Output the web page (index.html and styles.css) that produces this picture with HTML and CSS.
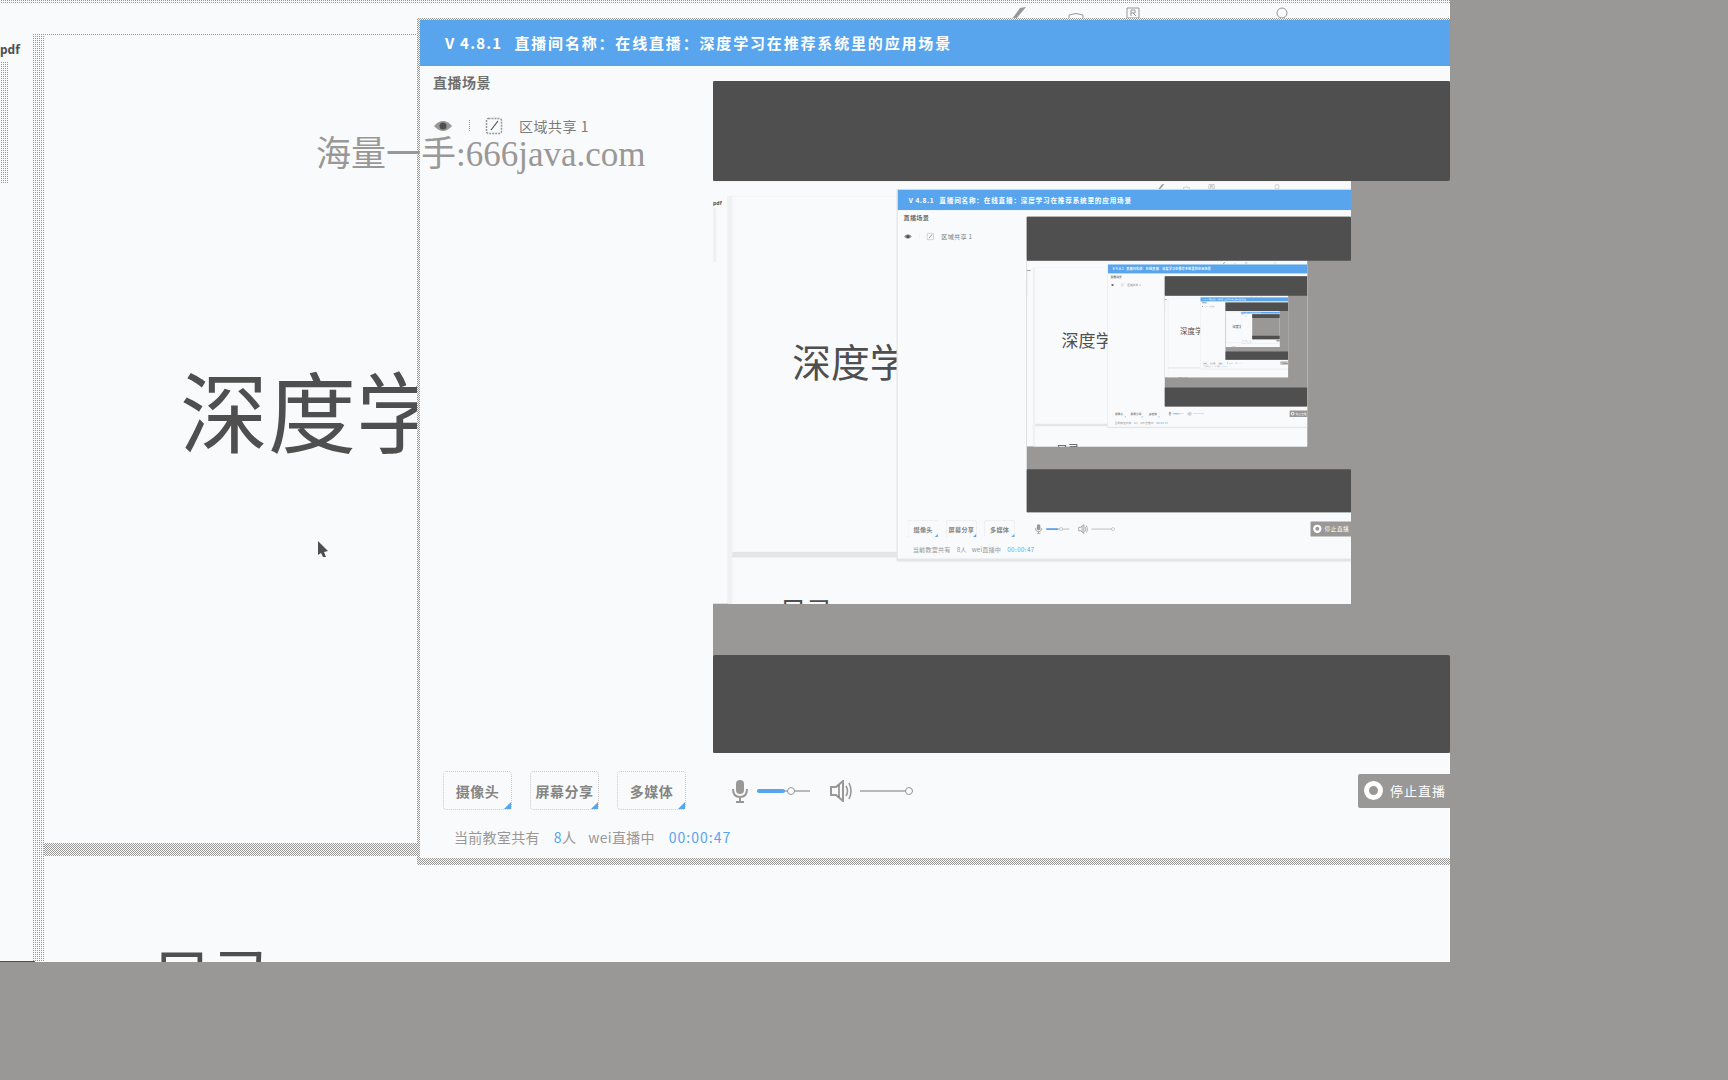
FILE: index.html
```html
<!DOCTYPE html>
<html lang='zh-CN'>
<head>
	<title>直播间</title>
	<meta charset='UTF-8'>
	<link rel="stylesheet" href="styles.css">
</head>
<body>
	<div class='screen'>
		<div class='desktop'>
			<div class='top-noise'></div>
			<div class='topbar'>
				<svg class='top-icon first' width='16' height='14' viewBox='0 0 16 14'><path d='M1 13 L9 2 L15 1 L10 7 L5 13 Z' fill='#999896'/></svg>
				<svg class='top-icon' width='16' height='14' viewBox='0 0 16 14'><path d='M1 13 V9 Q8 6 15 9 V13' fill='none' stroke='#999896'/></svg>
				<svg class='top-icon' width='16' height='14' viewBox='0 0 16 14'><path d='M2 2 H14 V12 H2 Z M6 4 V10 M6 4 H10 V7 H6 M8 7 L11 10' fill='none' stroke='#999896'/></svg>
				<svg class='top-icon last' width='12' height='14' viewBox='0 0 12 14'><circle cx='6' cy='7' r='5' fill='none' stroke='#999896'/></svg>
			</div>
			<div class='workspace'>
				<div class='sidebar'>
					<div class='file-name'>pdf</div>
					<div class='scrollbar'></div>
				</div>
				<div class='pages'>
					<div class='page page-first'><div class='page-title'>深度学习</div></div>
					<div class='page-gap'></div>
					<div class='page page-second'><div class='page-heading'>目录</div></div>
				</div>
			</div>
			<div class='bottom-edge'></div>
			<div class='window'>
				<div class='window-inner'>
					<div class='window-head'><span class='version'>V 4.8.1</span><span>直播间名称：在线直播：深度学习在推荐系统里的应用场景</span></div>
					<div class='window-main'>
						<div class='scenes'>
							<div class='scenes-title'>直播场景</div>
							<div class='scene-row'>
								<svg width='20' height='14' viewBox='0 0 20 14'><path d='M1 7 Q10 -3 19 7 Q10 17 1 7 Z' fill='#999896'/><circle cx='10' cy='7' r='3.5' fill='#4e4f4e'/></svg>
								<span class='scene-dots'></span>
								<svg width='18' height='18' viewBox='0 0 18 18'><rect x='1.5' y='1.5' width='15' height='15' rx='2' fill='none' stroke='#999896' stroke-width='1.5' stroke-dasharray='2 1'/><path d='M6 13 L13 4' stroke='#4e4f4e' stroke-width='1.2'/></svg>
								<span class='scene-name'>区域共享 1</span>
							</div>
						</div>
						<div class='stage'>
							<div class='stage-dark stage-top'></div>
							<div class='capture'></div>
							<div class='stage-dark stage-bottom'></div>
						</div>
					</div>
					<div class='window-foot'>
						<div class='controls'>
							<div class='tool'>摄像头</div>
							<div class='tool'>屏幕分享</div>
							<div class='tool'>多媒体</div>
							<svg class='mic' width='18' height='24' viewBox='0 0 18 24'><rect x='5' y='1' width='8' height='14' rx='4' fill='#999896'/><path d='M2 10 Q2 18 9 18 Q16 18 16 10 M9 18 V22 M5 23 H13' fill='none' stroke='#999896' stroke-width='2'/></svg>
							<div class='slider slider-mic'><span class='slider-fill'></span><span class='slider-knob'></span></div>
							<svg class='speaker' width='23' height='22' viewBox='0 0 23 22'><path d='M1 7 H6 L13 1 V21 L6 15 H1 Z' fill='none' stroke='#999896' stroke-width='2'/><path d='M16 6 Q19 11 16 16 M19 3 Q23 11 19 19' fill='none' stroke='#999896' stroke-width='1.6'/><path d='M9 5 V17' stroke='#4e4f4e'/></svg>
							<div class='slider slider-speaker'><span class='slider-knob'></span></div>
							<div class='stop-button'><span class='stop-ring'></span><span>停止直播</span></div>
						</div>
						<div class='status'>
							<span>当前教室共有</span><span class='count'><em>8</em>人</span><span class='teacher'>wei直播中</span><em class='timer'>00:00:47</em>
						</div>
					</div>
				</div>
			</div>
		</div>
		<div class='watermark'>海量一手:666java.com</div>
		<svg class='cursor' width='12' height='18' viewBox='0 0 12 18'><path d='M1 1 L11 11 L7 12 L9 17 L6 17 L4 13 L1 15 Z' fill='#4e4f4e'/></svg>
	</div>
	<script src='main.js'></script>
</body>
</html>
```

FILE: styles.css
```css
:root {
	--light: #f9fafc;
	--grey: #999896;
	--dark: #4e4f4e;
	--blue: #58a5ee;
	--dither: repeating-conic-gradient(#999896 0 25%, #f9fafc 0 50%) 0 0 / 2px 2px;
	--sparse: repeating-conic-gradient(#999896 0 25%, #f9fafc 0 100%) 0 0 / 2px 2px;
}
html, body {
	margin: 0;
	height: 100%;
	overflow: hidden;
	background: var(--grey);
}
body {
	font-family: "Noto Sans", "Noto Sans CJK SC", sans-serif;
}
em {
	font-style: normal;
	color: var(--blue);
}
.screen {
	position: relative;
	width: 1728px;
	height: 1080px;
}
.desktop {
	position: relative;
	display: flex;
	flex-direction: column;
	width: 1450px;
	height: 962px;
	overflow: hidden;
	background: var(--light);
}

/* top of the captured screen */
.top-noise {
	flex: none;
	height: 3px;
	background: var(--sparse);
}
.topbar {
	display: flex;
	align-items: center;
	flex: none;
	height: 31px;
	padding: 0 0 11px;
	box-sizing: border-box;
}
.top-icon {
	margin-left: 41px;
}
.top-icon.first {
	margin-left: 1011px;
}
.top-icon.last {
	margin-left: 135px;
}

/* slides behind the window */
.workspace {
	display: flex;
	flex: 1;
	min-height: 0;
}
.sidebar {
	width: 32px;
	padding-top: 8px;
}
.file-name {
	font-size: 12px;
	font-weight: 700;
	line-height: 16px;
	color: var(--dark);
}
.scrollbar {
	width: 8px;
	height: 122px;
	margin-top: 4px;
	background: var(--sparse);
}
.pages {
	display: flex;
	flex: 1;
	flex-direction: column;
	padding: 2px 0 0 12px;
	background: var(--sparse);
}
.page {
	background: var(--light);
	overflow: hidden;
}
.page-first {
	flex: none;
	height: 807px;
	padding: 328px 0 0 136px;
	box-sizing: border-box;
}
.page-gap {
	flex: none;
	height: 13px;
	background: var(--dither);
}
.page-second {
	flex: 1;
	padding: 88px 0 0 108px;
}
.page-title {
	font-family: "Noto Sans CJK SC", sans-serif;
	font-size: 88px;
	line-height: 88px;
	color: var(--dark);
	white-space: nowrap;
}
.page-heading {
	font-family: "Noto Sans CJK SC", sans-serif;
	font-size: 60px;
	line-height: 60px;
	color: var(--dark);
}
.bottom-edge {
	position: absolute;
	left: 0;
	bottom: 0;
	width: 35px;
	height: 1px;
	background: var(--dark);
}

/* live room window */
.window {
	position: absolute;
	left: 417px;
	top: 18px;
	width: 1036px;
	padding: 2px 0 7px 3px;
	background: var(--dither);
}
.window-inner {
	display: flex;
	flex-direction: column;
	height: 838px;
	background: var(--light);
}
.window-head {
	display: flex;
	align-items: center;
	flex: none;
	height: 46px;
	padding: 0 0 2px 25px;
	box-sizing: border-box;
	font-family: "Noto Sans CJK SC", sans-serif;
	font-size: 15px;
	font-weight: 700;
	letter-spacing: 1.83px;
	color: #fff;
	background: var(--blue);
}
.version {
	margin-right: 12px;
	letter-spacing: 1.2px;
}
.window-main {
	display: flex;
	flex: none;
	height: 687px;
	padding-top: 15px;
	box-sizing: border-box;
}
.scenes {
	flex: none;
	width: 293px;
	padding-left: 13px;
	box-sizing: border-box;
	font-family: "Noto Sans CJK SC", sans-serif;
}
.scenes-title {
	margin-top: -9px;
	font-size: 14px;
	font-weight: 700;
	line-height: 20px;
	letter-spacing: .5px;
	color: #6f706e;
}
.scene-row {
	display: flex;
	align-items: center;
	margin-top: 24px;
	height: 20px;
}
.scene-dots {
	width: 2px;
	height: 12px;
	margin: 0 15px;
	background: var(--sparse);
}
.scene-name {
	margin-left: 16px;
	font-size: 14px;
	letter-spacing: .5px;
	color: #7c7c7a;
}

/* video stage, it shows the captured screen */
.stage {
	display: flex;
	flex: none;
	flex-direction: column;
	width: 737px;
	height: 672px;
	background: var(--grey);
}
.stage-dark {
	flex: none;
	background: var(--dark);
	border-radius: 2px;
}
.stage-top {
	height: 100px;
}
.stage-bottom {
	height: 98px;
	margin-top: 51px;
}
.capture {
	flex: none;
	width: 638px;
	height: 423px;
	overflow: hidden;
}
.capture .desktop {
	--dither: #e4e5e6;
	--sparse: #f0f1f2;
	transform: scale(.44);
	transform-origin: 0 0;
}

/* bottom of the window */
.window-foot {
	flex: 1;
	padding: 18px 0 0 23px;
	font-family: "Noto Sans CJK SC", sans-serif;
}
.controls {
	display: flex;
	align-items: center;
	height: 39px;
}
.controls > * {
	flex: none;
}
.tool {
	position: relative;
	display: flex;
	align-items: center;
	justify-content: center;
	width: 69px;
	height: 39px;
	margin-right: 18px;
	box-sizing: border-box;
	border: 1px dotted #c9c9c9;
	border-radius: 4px;
	font-size: 14px;
	font-weight: 700;
	letter-spacing: .5px;
	color: #858583;
}
.tool::after {
	content: '';
	position: absolute;
	right: 0;
	bottom: 0;
	border-style: solid;
	border-width: 0 0 7px 7px;
	border-color: transparent transparent var(--blue) transparent;
}
.mic {
	margin-left: 27px;
}
.speaker {
	margin-left: 20px;
}
.slider {
	position: relative;
	width: 53px;
	height: 2px;
	margin-left: 8px;
	background: #b9b9b8;
}
.slider-fill {
	position: absolute;
	left: 0;
	top: -1px;
	width: 28px;
	height: 4px;
	border-radius: 2px;
	background: var(--blue);
}
.slider-knob {
	position: absolute;
	top: -3px;
	left: 30px;
	width: 8px;
	height: 8px;
	box-sizing: border-box;
	border: 1px solid var(--grey);
	border-radius: 50%;
	background: var(--light);
}
.slider-speaker {
	margin-left: 7px;
}
.slider-speaker .slider-knob {
	left: 45px;
}
.stop-button {
	display: flex;
	align-items: center;
	gap: 7px;
	width: 110px;
	height: 34px;
	margin-left: 445px;
	padding-left: 6px;
	box-sizing: border-box;
	border-radius: 2px;
	font-size: 13px;
	letter-spacing: 1px;
	color: #fff;
	background: var(--grey);
}
.stop-ring {
	width: 9px;
	height: 9px;
	border: 5px solid #fff;
	border-radius: 50%;
}
.status {
	display: flex;
	align-items: center;
	margin: 17px 0 0 11px;
	height: 20px;
	font-size: 14px;
	letter-spacing: .3px;
	color: var(--grey);
}
.count {
	margin-left: 14px;
}
.teacher {
	margin-left: 12px;
}
.timer {
	margin-left: 14px;
	letter-spacing: 1px;
}

/* overlays on the recording */
.watermark {
	position: absolute;
	left: 316px;
	top: 134px;
	font-family: "Liberation Serif", "Noto Sans CJK SC", serif;
	font-size: 35px;
	line-height: 42px;
	color: var(--grey);
	white-space: nowrap;
}
.cursor {
	position: absolute;
	left: 317px;
	top: 540px;
}
```

FILE: main.js
```js
// the stage shows the captured screen, which shows the stage again
var desktop = document.querySelector('.desktop');
var master = desktop.cloneNode(true);
var slot = desktop.querySelector('.capture');
var copy;
for (var i = 0; i < 4; i++) {
	copy = master.cloneNode(true);
	slot.appendChild(copy);
	slot = copy.querySelector('.capture');
}
// the last copy is too small for its smallest texts to have any size
copy.querySelector('.file-name').textContent = '';
copy.querySelector('.count').textContent = '';
```
